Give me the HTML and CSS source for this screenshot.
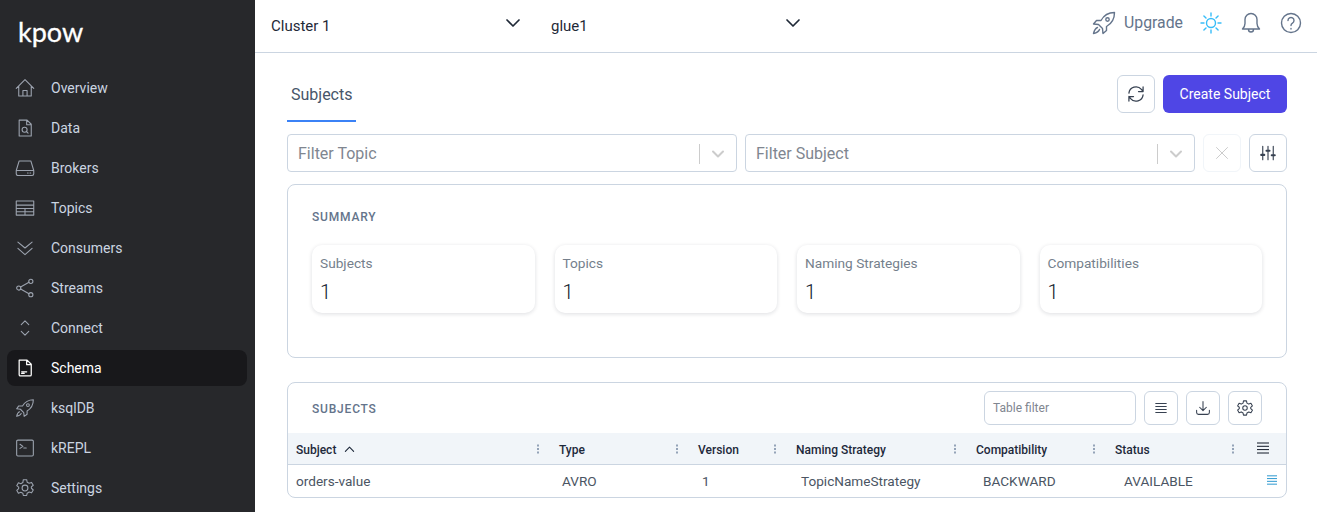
FILE: index.html
```html
<!DOCTYPE html>
<html lang="en">
<head>
  <meta charset="UTF-8" />
  <title>kPow - Schema</title>
  <link rel="stylesheet" href="styles.css">
</head>
<body>
  <div class="app">
    <aside class="sidebar">
      <div class="logo">kpow</div>
      <nav class="nav">
        <a class="nav-item"><svg class="icon" viewBox="0 0 24 24"><path d="M1.500 12.500 12 2l10.500 10.500M4.500 10v11.500h15V10M9.500 21.500V15h5v6.500"/></svg>Overview</a>
        <a class="nav-item"><svg class="icon" viewBox="0 0 24 24"><path d="M5 2.500h9.500l5 5v14H5zM14 2.500V8h5.500"/><circle cx="11.500" cy="14" r="3"/><path d="m13.700 16.200 2 2"/></svg>Data</a>
        <a class="nav-item"><svg class="icon" viewBox="0 0 24 24"><path d="M1.500 15 5 3.500h14L22.500 15M1.500 15h21v4a2 2 0 0 1-2 2h-17a2 2 0 0 1-2-2zM15 18h.8M18 18h.8"/></svg>Brokers</a>
        <a class="nav-item"><svg class="icon" viewBox="0 0 24 24"><path d="M1.500 3.500h21v17h-21zM1.500 8.500h21M1.500 12.500h21M1.500 16.500h21M12 12.500v8"/></svg>Topics</a>
        <a class="nav-item"><svg class="icon" viewBox="0 0 24 24"><path d="m3.500 5 8.500 7 8.500-7M3.500 12.500 12 20l8.500-7.500"/></svg>Consumers</a>
        <a class="nav-item"><svg class="icon" viewBox="0 0 24 24"><circle cx="4.500" cy="12" r="2.500"/><circle cx="19" cy="4" r="2.500"/><circle cx="19" cy="20" r="2.500"/><path d="m6.700 10.800 10.100-5.600M6.700 13.200l10.100 5.600"/></svg>Streams</a>
        <a class="nav-item"><svg class="icon" viewBox="0 0 24 24"><path d="m7.500 8 4.500-4.500L16.500 8M7.500 16l4.500 4.500 4.500-4.500"/></svg>Connect</a>
        <a class="nav-item active"><svg class="icon" viewBox="0 0 24 24"><path d="M5 2.500h9.500l5 5V20a1.500 1.500 0 0 1-1.500 1.500H6.500A1.500 1.500 0 0 1 5 20zM14 2.500V8h5.500M8 16.500h6M8 18.500h3"/></svg>Schema</a>
        <a class="nav-item"><svg class="icon" viewBox="0 0 24 24"><path d="M22 2c-6 0-10 2.500-13 7.500H4.500L2 13l4.500.5 4 4L11 22l3.500-2.500v-4C19.500 12.500 22 8 22 2z"/><circle cx="15.500" cy="8.500" r="1.700"/><path d="M5.500 16.500c-1.500.5-2.800 2-3.500 5.500 3.500-.7 5-2 5.500-3.500"/></svg>ksqlDB</a>
        <a class="nav-item"><svg class="icon" viewBox="0 0 24 24"><rect x="2" y="2.500" width="20" height="19" rx="1.500"/><path d="m6 7.500 3.500 2.500L6 12.500M10.500 12h3"/></svg>kREPL</a>
        <a class="nav-item"><svg class="icon" viewBox="0 0 24 24"><circle cx="12" cy="12" r="3.500"/><path d="M10 2h4l.6 3 2.400 1.300 2.900-1 2 3.400-2.300 2 .1 1.600 2.200 2.100-2 3.400-2.900-1-2.400 1.400-.6 2.800h-4l-.6-2.800L7 17.200l-2.900 1-2-3.400 2.300-2.100V11L2.100 9.200l2-3.400 2.900 1 2.400-1.300z"/></svg>Settings</a>
      </nav>
    </aside>

    <div class="page">
      <header class="topbar">
        <div class="env-select">Cluster 1 <svg class="chev" viewBox="0 0 16 16"><path d="m2 5 6 6 6-6"/></svg></div>
        <div class="env-select">glue1 <svg class="chev" viewBox="0 0 16 16"><path d="m2 5 6 6 6-6"/></svg></div>
        <div class="top-actions">
          <a class="upgrade"><svg class="top-icon" viewBox="0 0 24 24"><path d="M22.500 1.500c-6 0-10.500 2.500-13.500 8H4.500L1.500 13l5 .5 4 4 .5 5 3.500-3v-4c5.500-3 8-7.500 8-14z"/><circle cx="15.500" cy="8.500" r="1.700"/><path d="M5.500 16.500c-1.500.5-3 2-4 6 4-1 5.500-2.500 6-4"/></svg>Upgrade</a>
          <svg class="top-icon sun" viewBox="0 0 24 24"><circle cx="12" cy="12" r="4.500"/><path d="M12 2v3M12 19v3M2 12h3M19 12h3M4.900 4.900l2.100 2.100M17 17l2.100 2.100M4.900 19.100 7 17M17 7l2.100-2.100"/></svg>
          <svg class="top-icon" viewBox="0 0 24 24"><path d="M3.500 18c1.500-1.500 2.500-2.500 2.500-5.500V8.500a6 6 0 0 1 12 0v4c0 3 1 4 2.500 5.500zM9.500 18.500a2.500 2.500 0 0 0 5 0"/></svg>
          <svg class="top-icon" viewBox="0 0 24 24"><circle cx="12" cy="12" r="9.500"/><path d="M9 9.500a3 3 0 1 1 4.500 2.600c-1 .6-1.500 1.200-1.500 2.400M12 17.500v.5"/></svg>
        </div>
      </header>

      <main class="content">
        <div class="tab-row">
          <div class="tab">Subjects</div>
          <div class="tab-actions">
            <button class="btn-icon btn-38"><svg class="icon-dark" viewBox="0 0 24 24"><path d="M3.500 11a8.500 8.500 0 0 1 15-4.500l2 2.500M20.500 3.500V9H15M20.500 13a8.500 8.500 0 0 1-15 4.500l-2-2.500M3.500 20.500V15H9"/></svg></button>
            <button class="btn-primary">Create Subject</button>
          </div>
        </div>

        <div class="filter-row">
          <div class="filter">Filter Topic<span class="filter-sep"></span><svg class="filter-chev" viewBox="0 0 16 16"><path d="m3 5.500 5 5 5-5"/></svg></div>
          <div class="filter">Filter Subject<span class="filter-sep"></span><svg class="filter-chev" viewBox="0 0 16 16"><path d="m3 5.500 5 5 5-5"/></svg></div>
          <button class="btn-icon btn-38 disabled"><svg class="icon-x" viewBox="0 0 16 16"><path d="m2.500 2.500 11 11M13.500 2.500l-11 11"/></svg></button>
          <button class="btn-icon btn-38"><svg class="icon-sliders" viewBox="0 0 24 24"><path d="M5 3v18M12 3v18M19 3v18"/><path class="thick" d="M3 14.500h4M10 9h4M17 15h4"/></svg></button>
        </div>

        <section class="panel summary">
          <h2 class="panel-title">SUMMARY</h2>
          <div class="stat-grid">
            <div class="stat"><div class="stat-label">Subjects</div><div class="stat-value">1</div></div>
            <div class="stat"><div class="stat-label">Topics</div><div class="stat-value">1</div></div>
            <div class="stat"><div class="stat-label">Naming Strategies</div><div class="stat-value">1</div></div>
            <div class="stat"><div class="stat-label">Compatibilities</div><div class="stat-value">1</div></div>
          </div>
        </section>

        <section class="panel subjects">
          <div class="table-bar">
            <h2 class="panel-title">SUBJECTS</h2>
            <div class="table-tools">
              <div class="table-filter">Table filter</div>
              <button class="btn-icon btn-34"><svg class="icon-tool" viewBox="0 0 24 24"><path d="M5 6h14M5 10h14M5 14h14M5 18h14"/></svg></button>
              <button class="btn-icon btn-34"><svg class="icon-tool" viewBox="0 0 24 24"><path d="M12 3.500V15M7.500 11l4.500 4.500 4.500-4.500M3.500 15v3a2.500 2.500 0 0 0 2.500 2.500h12a2.500 2.500 0 0 0 2.500-2.500v-3"/></svg></button>
              <button class="btn-icon btn-34"><svg class="icon-tool" viewBox="0 0 24 24"><circle cx="12" cy="12" r="3"/><path d="M10 2.500h4l.6 3 2.400 1.300 2.900-1 2 3.400-2.300 2 .1 1.600 2.200 2.100-2 3.400-2.900-1-2.400 1.400-.6 2.800h-4l-.6-2.800L7 17.200l-2.900 1-2-3.400 2.300-2.100V11L2.100 9.200l2-3.400 2.900 1 2.400-1.300z"/></svg></button>
            </div>
          </div>
          <div class="thead">
            <div class="th"><span>Subject <svg class="sort" viewBox="0 0 12 12"><path d="m1.500 8 4.500-4.500L10.500 8"/></svg></span><i class="kebab"></i></div>
            <div class="th"><span>Type</span><i class="kebab"></i></div>
            <div class="th"><span>Version</span><i class="kebab"></i></div>
            <div class="th"><span>Naming Strategy</span><i class="kebab"></i></div>
            <div class="th"><span>Compatibility</span><i class="kebab"></i></div>
            <div class="th"><span>Status</span><i class="kebab"></i></div>
            <div class="th-menu"><svg class="lines" viewBox="0 0 12 12"><path d="M0 1h12M0 4.300h12M0 7.600h12M0 11h12"/></svg></div>
          </div>
          <div class="trow">
            <div>orders-value</div>
            <div>AVRO</div>
            <div>1</div>
            <div>TopicNameStrategy</div>
            <div>BACKWARD</div>
            <div>AVAILABLE</div>
            <div class="row-menu"><svg class="lines blue" viewBox="0 0 12 12"><path d="M0 1h12M0 4.300h12M0 7.600h12M0 11h12"/></svg></div>
          </div>
        </section>
      </main>
    </div>
  </div>
</body>
</html>
```

FILE: styles.css
```css
* {
  box-sizing: border-box;
}

html, body {
  height: 100%;
}

body {
  margin: 0;
  overflow: hidden;
  font-family: Roboto, Arial, sans-serif;
  font-size: 14px;
  color: #334155;
  background: #fff;
}

svg {
  fill: none;
  stroke: currentColor;
  stroke-linecap: round;
  stroke-linejoin: round;
  flex: none;
  display: block;
}

button {
  font-family: inherit;
  cursor: pointer;
}

.app {
  display: flex;
  height: 100vh;
}

/* sidebar */
.sidebar {
  width: 255px;
  flex: none;
  background: #27282b;
  color: #cbd5e1;
}

.logo {
  height: 70px;
  padding: 14px 0 0 18px;
  font-family: Lato, sans-serif;
  font-size: 27px;
  line-height: 36px;
  color: #fff;
  -webkit-text-stroke: 0.3px #fff;
}

.nav {
  display: flex;
  flex-direction: column;
  gap: 4px;
  margin: 0 8px 0 7px;
}

.nav-item {
  display: flex;
  align-items: center;
  gap: 16px;
  height: 36px;
  padding-left: 8px;
  border-radius: 8px;
}

.nav-item .icon {
  width: 20px;
  height: 20px;
  stroke-width: 1.3;
  color: #9ca3af;
}

.nav-item.active {
  background: #18181b;
  color: #fff;
}

.nav-item.active .icon {
  color: #fff;
  stroke-width: 1.5;
}

/* top bar */
.page {
  flex: 1;
  min-width: 0;
}

.topbar {
  display: flex;
  align-items: center;
  height: 53px;
  border-bottom: 1px solid #cbd5e1;
}

.env-select {
  display: flex;
  align-items: center;
  justify-content: space-between;
  width: 280px;
  padding: 0 14px 0 16px;
  font-size: 15px;
  color: #1f2937;
}

.chev {
  width: 16px;
  height: 16px;
  margin-top: -6px;
  stroke-width: 1.7;
  color: #1f2937;
}

.top-actions {
  display: flex;
  align-items: center;
  gap: 16px;
  margin-left: auto;
  padding: 0 14px 7px 0;
  color: #64748b;
}

.upgrade {
  display: flex;
  align-items: center;
  gap: 8px;
  font-size: 15.8px;
}

.top-icon {
  width: 24px;
  height: 24px;
  stroke-width: 1.4;
}

.sun {
  color: #38bdf8;
}

/* content */
.content {
  padding: 22px 30px 0 32px;
}

.tab-row {
  display: flex;
  justify-content: space-between;
  margin-bottom: 12px;
}

.tab {
  height: 47px;
  padding: 10px 4px 0;
  font-size: 16px;
  line-height: 20px;
  color: #475569;
  border-bottom: 2px solid #3b82f6;
}

.tab-actions {
  display: flex;
  gap: 8px;
}

.btn-icon {
  display: flex;
  align-items: center;
  justify-content: center;
  padding: 0;
  background: #fff;
  border: 1px solid #cbd5e1;
  border-radius: 6px;
}

.btn-38 {
  width: 38px;
  height: 38px;
}

.btn-34 {
  width: 34px;
  height: 34px;
}

.btn-primary {
  width: 124px;
  height: 38px;
  background: #4f46e5;
  border: none;
  border-radius: 6px;
  color: #fff;
  font-size: 14px;
}

.icon-dark {
  width: 20px;
  height: 20px;
  stroke-width: 1.5;
  color: #374151;
}

.icon-sliders {
  width: 18px;
  height: 18px;
  stroke-width: 1.5;
  color: #374151;
}

.icon-sliders .thick {
  stroke-width: 2.8;
}

.disabled {
  border-color: #f1f5f9;
}

.icon-x {
  width: 16px;
  height: 16px;
  stroke-width: 1;
  color: #cccccc;
}

.filter-row {
  display: flex;
  gap: 8px;
  margin-bottom: 12px;
}

.filter {
  display: flex;
  align-items: center;
  flex: 1;
  height: 38px;
  padding: 1px 10px 0;
  border: 1px solid #cbd5e1;
  border-radius: 4px;
  font-size: 16px;
  color: #808690;
}

.filter-sep {
  width: 1px;
  height: 20px;
  margin-left: auto;
  background: #cccccc;
}

.filter-chev {
  width: 16px;
  height: 16px;
  margin-left: 10px;
  stroke-width: 2;
  color: #cccccc;
}

.panel {
  border: 1px solid #cbd5e1;
  border-radius: 8px;
  overflow: hidden;
}

.panel-title {
  margin: 0;
  font-size: 12px;
  line-height: 16px;
  font-weight: 500;
  letter-spacing: 0.8px;
  color: #64748b;
}

.summary {
  height: 174px;
  padding: 24px 24px 0;
  margin-bottom: 24px;
}

.stat-grid {
  display: grid;
  grid-template-columns: repeat(4, 1fr);
  gap: 20px;
  margin-top: 20px;
}

.stat {
  height: 68px;
  padding: 8px;
  background: #fff;
  border-radius: 10px;
  box-shadow: 0 1px 4px rgba(15, 23, 42, 0.14);
}

.stat-label {
  font-size: 13.7px;
  line-height: 20px;
  color: #757f8c;
}

.stat-value {
  margin-top: 5px;
  font-size: 20px;
  line-height: 28px;
  font-weight: 300;
  color: #0f172a;
}

/* subjects table */
.table-bar {
  display: flex;
  align-items: center;
  justify-content: space-between;
  padding: 8px 24px 0;
  margin-bottom: 8px;
}

.table-bar .panel-title {
  margin-top: 2px;
}

.table-tools {
  display: flex;
  gap: 8px;
}

.table-filter {
  display: flex;
  align-items: center;
  width: 152px;
  height: 34px;
  padding-left: 8px;
  border: 1px solid #cbd5e1;
  border-radius: 6px;
  font-size: 12px;
  color: #808690;
}

.icon-tool {
  width: 18px;
  height: 18px;
  stroke-width: 1.4;
  color: #374151;
}

.thead {
  display: grid;
  grid-template-columns: 263px 139px 98px 180px 139px 139px 1fr;
  height: 32px;
  padding-left: 8px;
  background: #f1f5f9;
  border-bottom: 1px solid #cbd5e1;
  font-size: 12px;
  font-weight: 500;
  color: #1e293b;
}

.th {
  display: flex;
  align-items: center;
  justify-content: space-between;
  padding-right: 20px;
}

.th span {
  display: flex;
  align-items: center;
  gap: 8px;
  padding-top: 2px;
}

.sort {
  width: 11px;
  height: 11px;
  stroke-width: 1.2;
}

.kebab {
  width: 2px;
  height: 2px;
  background: #94a3b8;
  box-shadow: 0 -3.500px 0 #94a3b8, 0 3.500px 0 #94a3b8;
}

.th-menu {
  display: flex;
  align-items: center;
  padding: 0 0 1px 3px;
}

.lines {
  width: 12px;
  height: 12px;
  stroke-width: 1;
  stroke-linecap: butt;
  color: #111827;
}

.lines.blue {
  color: #0284c7;
  height: 10px;
}

.trow {
  display: grid;
  grid-template-columns: 266px 140px 99px 182px 141px 122px 1fr;
  align-items: center;
  height: 32px;
  padding-left: 8px;
  font-size: 13.6px;
  color: #4b5563;
}

.row-menu {
  padding: 0 0 3px 20px;
}
```
